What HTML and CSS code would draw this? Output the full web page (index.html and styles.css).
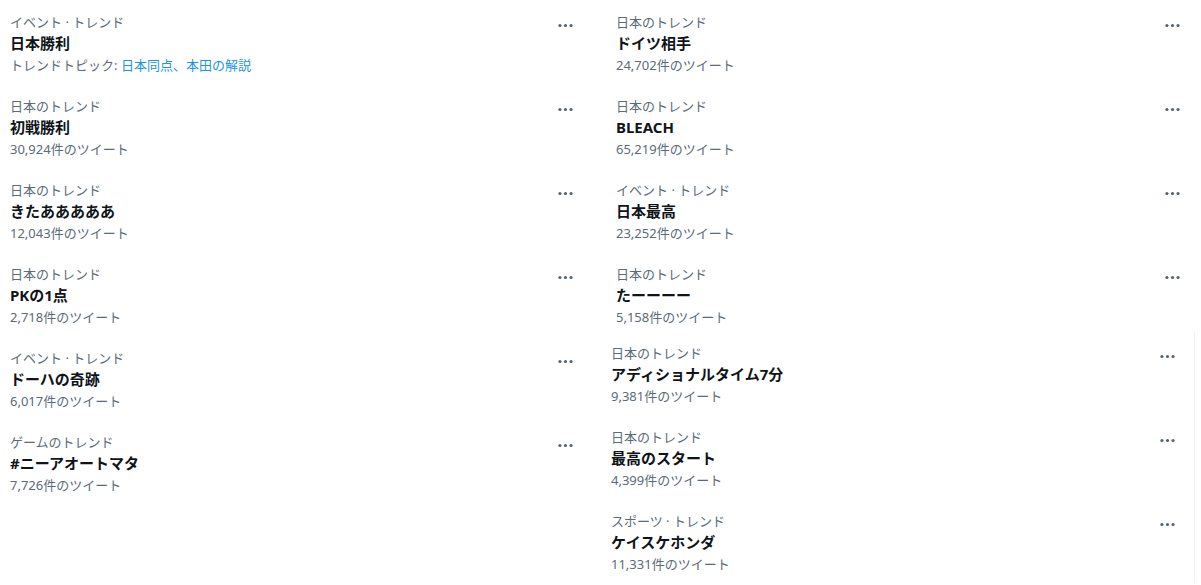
FILE: index.html
```html
<!DOCTYPE html>
<html lang="ja">
<head>
<meta charset="utf-8">
<link rel="stylesheet" href="styles.css">
</head>
<body>
<div class="page">
  <div class="col col-left">
    <div class="item">
      <div class="text">
        <div class="meta">イベント · トレンド</div>
        <div class="title">日本勝利</div>
        <div class="meta count">トレンドトピック: <span class="link">日本同点、本田の解説</span></div>
      </div>
      <svg class="more" viewBox="0 0 24 24"><circle cx="5" cy="12" r="2"/><circle cx="12" cy="12" r="2"/><circle cx="19" cy="12" r="2"/></svg>
    </div>
    <div class="item">
      <div class="text">
        <div class="meta">日本のトレンド</div>
        <div class="title">初戦勝利</div>
        <div class="meta count">30,924件のツイート</div>
      </div>
      <svg class="more" viewBox="0 0 24 24"><circle cx="5" cy="12" r="2"/><circle cx="12" cy="12" r="2"/><circle cx="19" cy="12" r="2"/></svg>
    </div>
    <div class="item">
      <div class="text">
        <div class="meta">日本のトレンド</div>
        <div class="title">きたあああああ</div>
        <div class="meta count">12,043件のツイート</div>
      </div>
      <svg class="more" viewBox="0 0 24 24"><circle cx="5" cy="12" r="2"/><circle cx="12" cy="12" r="2"/><circle cx="19" cy="12" r="2"/></svg>
    </div>
    <div class="item">
      <div class="text">
        <div class="meta">日本のトレンド</div>
        <div class="title">PKの1点</div>
        <div class="meta count">2,718件のツイート</div>
      </div>
      <svg class="more" viewBox="0 0 24 24"><circle cx="5" cy="12" r="2"/><circle cx="12" cy="12" r="2"/><circle cx="19" cy="12" r="2"/></svg>
    </div>
    <div class="item">
      <div class="text">
        <div class="meta">イベント · トレンド</div>
        <div class="title">ドーハの奇跡</div>
        <div class="meta count">6,017件のツイート</div>
      </div>
      <svg class="more" viewBox="0 0 24 24"><circle cx="5" cy="12" r="2"/><circle cx="12" cy="12" r="2"/><circle cx="19" cy="12" r="2"/></svg>
    </div>
    <div class="item">
      <div class="text">
        <div class="meta">ゲームのトレンド</div>
        <div class="title">#ニーアオートマタ</div>
        <div class="meta count">7,726件のツイート</div>
      </div>
      <svg class="more" viewBox="0 0 24 24"><circle cx="5" cy="12" r="2"/><circle cx="12" cy="12" r="2"/><circle cx="19" cy="12" r="2"/></svg>
    </div>
  </div>

  <div class="col col-right">
    <div class="group group-top">
      <div class="item">
        <div class="text">
          <div class="meta">日本のトレンド</div>
          <div class="title">ドイツ相手</div>
          <div class="meta count">24,702件のツイート</div>
        </div>
        <svg class="more" viewBox="0 0 24 24"><circle cx="5" cy="12" r="2"/><circle cx="12" cy="12" r="2"/><circle cx="19" cy="12" r="2"/></svg>
      </div>
      <div class="item">
        <div class="text">
          <div class="meta">日本のトレンド</div>
          <div class="title">BLEACH</div>
          <div class="meta count">65,219件のツイート</div>
        </div>
        <svg class="more" viewBox="0 0 24 24"><circle cx="5" cy="12" r="2"/><circle cx="12" cy="12" r="2"/><circle cx="19" cy="12" r="2"/></svg>
      </div>
      <div class="item">
        <div class="text">
          <div class="meta">イベント · トレンド</div>
          <div class="title">日本最高</div>
          <div class="meta count">23,252件のツイート</div>
        </div>
        <svg class="more" viewBox="0 0 24 24"><circle cx="5" cy="12" r="2"/><circle cx="12" cy="12" r="2"/><circle cx="19" cy="12" r="2"/></svg>
      </div>
      <div class="item">
        <div class="text">
          <div class="meta">日本のトレンド</div>
          <div class="title">たーーーー</div>
          <div class="meta count">5,158件のツイート</div>
        </div>
        <svg class="more" viewBox="0 0 24 24"><circle cx="5" cy="12" r="2"/><circle cx="12" cy="12" r="2"/><circle cx="19" cy="12" r="2"/></svg>
      </div>
    </div>
    <div class="group group-bottom">
      <div class="item">
        <div class="text">
          <div class="meta">日本のトレンド</div>
          <div class="title">アディショナルタイム7分</div>
          <div class="meta count">9,381件のツイート</div>
        </div>
        <svg class="more" viewBox="0 0 24 24"><circle cx="5" cy="12" r="2"/><circle cx="12" cy="12" r="2"/><circle cx="19" cy="12" r="2"/></svg>
      </div>
      <div class="item">
        <div class="text">
          <div class="meta">日本のトレンド</div>
          <div class="title">最高のスタート</div>
          <div class="meta count">4,399件のツイート</div>
        </div>
        <svg class="more" viewBox="0 0 24 24"><circle cx="5" cy="12" r="2"/><circle cx="12" cy="12" r="2"/><circle cx="19" cy="12" r="2"/></svg>
      </div>
      <div class="item">
        <div class="text">
          <div class="meta">スポーツ · トレンド</div>
          <div class="title">ケイスケホンダ</div>
          <div class="meta count">11,331件のツイート</div>
        </div>
        <svg class="more" viewBox="0 0 24 24"><circle cx="5" cy="12" r="2"/><circle cx="12" cy="12" r="2"/><circle cx="19" cy="12" r="2"/></svg>
      </div>
    </div>
  </div>
</div>
</body>
</html>
```

FILE: styles.css
```css
html, body {
  margin: 0;
  padding: 0;
  background: #ffffff;
}

body {
  width: 1201px;
  height: 585px;
  overflow: hidden;
  font-family: "Noto Sans", "Noto Sans CJK JP", sans-serif;
  color: #0f1419;
}

.page {
  display: flex;
  align-items: flex-start;
}

.col-left {
  width: 600px;
  flex: none;
}

.col-right {
  margin-left: 6px;
  width: 595px;
  flex: none;
}

.item {
  display: flex;
  justify-content: space-between;
  align-items: flex-start;
  height: 84px;
  box-sizing: border-box;
  padding: 12px 0 0 10px;
}

.col-left .item {
  padding-right: 25px;
}

.group-top .item {
  padding-right: 19px;
}

.group-bottom {
  margin-left: -5px;
  margin-top: -5px;
  width: 594px;
  border-right: 1px solid #eff3f4;
  box-sizing: border-box;
}

.group-bottom .item {
  padding-right: 17px;
}

.text {
  display: flex;
  flex-direction: column;
}

.meta {
  font-size: 13px;
  line-height: 20px;
  color: #5b6b78;
  white-space: nowrap;
}

.count {
  line-height: 22px;
}

.title {
  font-size: 15px;
  line-height: 22px;
  font-weight: 700;
  color: #0f1419;
  white-space: nowrap;
}

.link {
  color: #1b95e0;
}

.more {
  width: 19px;
  height: 19px;
  margin-top: 4px;
  fill: #536471;
  flex: none;
}
```
